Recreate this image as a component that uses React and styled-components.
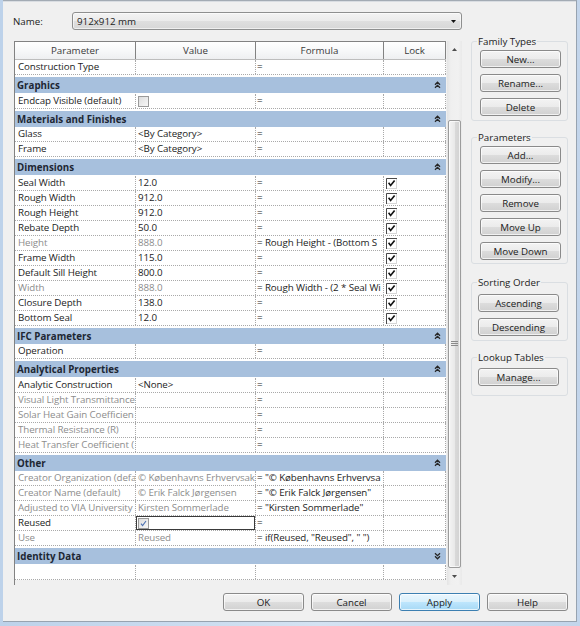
import React from 'react'
import styled, { createGlobalStyle, css } from 'styled-components'

const GRAY = '#8d8d8d'
const BAND = '#a7c0dd'
const DOTS = '1px dotted #a9a9a9'

const GlobalStyle = createGlobalStyle`
  html, body {
    margin: 0;
    padding: 0;
  }
  body {
    font-family: "Open Sans", "Noto Sans", sans-serif;
    font-size: 9.75px;
    color: #1c1c1c;
    background: #c9daee;
  }
`

const Window = styled.div`
  width: 580px;
  height: 626px;
  box-sizing: border-box;
  padding: 0 3px 4px 3px;
  background: linear-gradient(90deg, #bdd2ea, #d4e3f3 55%, #c3d5eb);
`
const Dialog = styled.div`
  height: 100%;
  box-sizing: border-box;
  display: flex;
  flex-direction: column;
  padding: 11px 8px 0 10px;
  background: #f0f0f0;
  border-top: 1px solid #a3abb4;
  border-right: 1px solid #97a3b0;
  border-bottom: 1px solid #97a3b0;
  box-shadow: inset 0 1px 0 #d9dde2;
`
const NameRow = styled.div`
  display: flex;
  align-items: center;
  height: 18px;
`
const NameLabel = styled.span`
  width: 59px;
`
const Combo = styled.div`
  width: 390px;
  height: 18px;
  box-sizing: border-box;
  display: flex;
  align-items: center;
  justify-content: space-between;
  padding: 0 5px 0 4px;
  border: 1px solid #8e8f8f;
  border-radius: 3px;
  background: linear-gradient(#f3f3f3, #ebebeb 50%, #dfdfdf 50%, #d7d7d7);
  box-shadow: inset 0 0 0 1px rgba(255, 255, 255, 0.6);
`
const Main = styled.div`
  display: flex;
  align-items: flex-start;
  margin-top: 11px;
`
const GridFrame = styled.div`
  display: flex;
  margin-left: 1px;
  width: 448px;
  height: 544px;
`
const Grid = styled.div`
  width: 432px;
  box-sizing: border-box;
  border-left: 1px solid #828282;
`
const cols = css`
  display: grid;
  grid-template-columns: 121px 120px 128px 62px;
`
const HeadRow = styled.div`
  ${cols}
  height: 19px;
  box-sizing: border-box;
  border-top: 1px solid #828282;
  border-bottom: 1px solid #bdbdbd;
`
const HeadCell = styled.div`
  line-height: 17px;
  text-align: center;
  color: #3a3a3a;
  border-right: 1px solid #828282;
  background: linear-gradient(#ffffff, #f7f8f9 50%, #eeeff1);
`
const Row = styled.div`
  ${cols}
  height: 15px;
  box-sizing: border-box;
  background: #fff;
  border-bottom: ${DOTS};
`
const Cell = styled.div`
  padding-left: ${p => p.$pad}px;
  line-height: 13px;
  letter-spacing: -0.1px;
  white-space: nowrap;
  overflow: hidden;
  border-right: ${DOTS};
  color: ${p => (p.$dim ? GRAY : 'inherit')};
  box-shadow: ${p => (p.$sel ? 'inset 0 0 0 1px #3a3a3a' : 'none')};
`
const GroupRow = styled.div`
  height: ${p => p.$h}px;
  box-sizing: border-box;
  padding: 2px 0 0;
  background: #fff;
`
const Band = styled.div`
  height: 16px;
  display: flex;
  align-items: center;
  justify-content: space-between;
  padding: 0 5px 0 2px;
  background: ${BAND};
  font-weight: 700;
  color: #1d2733;
`
const BoxIcon = styled.svg`
  display: block;
  margin: 2px 0 0 ${p => p.$left}px;
`
const Scroll = styled.div`
  margin-left: 1px;
  width: 15px;
  display: flex;
  flex-direction: column;
  background: linear-gradient(90deg, #e4e4e4, #efefef 25%, #f1f1f1 75%, #e9e9e9);
`
const ScrollArrow = styled.div`
  height: 17px;
  display: flex;
  align-items: center;
  justify-content: center;
`
const ScrollGap = styled.div`
  height: 62px;
`
const Thumb = styled.div`
  flex: 1;
  margin: 0 1px;
  display: flex;
  align-items: center;
  justify-content: center;
  border: 1px solid #9c9c9c;
  border-radius: 2px;
  background: linear-gradient(90deg, #f4f4f4, #e9e9e9 50%, #dadada 50%, #d2d2d2);
  box-shadow: inset 0 0 0 1px rgba(255, 255, 255, 0.7);
`
const Side = styled.div`
  margin: -6px 0 0 9px;
  width: 97px;
  display: flex;
  flex-direction: column;
`
const GroupBox = styled.fieldset`
  margin: ${p => p.$gap}px 0 0;
  padding: ${p => p.$pt}px 6px ${p => p.$pb}px ${p => p.$pl}px;
  border: 1px solid #dadee2;
  border-radius: 3px;
  min-width: 0;
`
const Legend = styled.legend`
  padding: 0 1px;
  margin-left: ${p => 5 - p.$pl}px;
  line-height: 13px;
  color: #1c1c1c;
`
const Stack = styled.div`
  display: flex;
  flex-direction: column;
  gap: 6px;
`
const Button = styled.button`
  width: 81px;
  height: 18px;
  padding: 0;
  box-sizing: border-box;
  font: inherit;
  color: #1c1c1c;
  border: 1px solid ${p => (p.$primary ? '#3c7fb1' : '#8a8a8a')};
  border-radius: 3px;
  background: ${p => (p.$primary
    ? 'linear-gradient(#eaf6fd, #d9f0fc 50%, #bee6fd 50%, #a7d9f5)'
    : 'linear-gradient(#f3f3f3, #ebebeb 50%, #dddddd 50%, #d1d1d1)')};
  box-shadow: inset 0 0 0 1px rgba(255, 255, 255, 0.7);
`
const Footer = styled.div`
  display: flex;
  justify-content: flex-end;
  gap: 7px;
  margin-top: 8px;
`

const Chevrons = ({ down }) => (
  <svg width="7" height="8" viewBox="0 0 7 8">
    <path
      d={down ? 'M1 1.2l2.5 2.5L6 1.2M1 4.3l2.5 2.5L6 4.3' : 'M1 3.7l2.5-2.5L6 3.7M1 6.8l2.5-2.5L6 6.8'}
      fill="none"
      stroke="#262626"
      strokeWidth="1.3"
    />
  </svg>
)

const Lock = () => (
  <BoxIcon $left={2} width="11" height="11" viewBox="0 0 11 11">
    <rect x="0.5" y="0.5" width="10" height="10" fill="#fff" stroke="#d6d6d6" />
    <path d="M0.5 11V0.5H11" fill="none" stroke="#4a4a4a" />
    <path d="M2.6 4.8l2 2.6 4-5" fill="none" stroke="#111" strokeWidth="1.6" />
  </BoxIcon>
)

const Tick = ({ on }) => (
  <BoxIcon $left={0} width="11" height="11" viewBox="0 0 11 11">
    <defs>
      <linearGradient id={on ? 'tk1' : 'tk0'} x1="0" y1="0" x2="1" y2="1">
        <stop offset="0" stopColor="#dcdcdc" />
        <stop offset="1" stopColor="#f8f8f8" />
      </linearGradient>
    </defs>
    <rect x="0.5" y="0.5" width="10" height="10" fill={`url(#${on ? 'tk1' : 'tk0'})`} stroke="#9a9a9a" />
    {on && <path d="M3 5.6l1.6 1.9L8 3" fill="none" stroke="#4a6fb0" strokeWidth="1.1" />}
  </BoxIcon>
)

const Arrow = ({ down, color = '#4d4d4d' }) => (
  <svg width="5" height="3" viewBox="0 0 5 3">
    <path d={down ? 'M0 0h5L2.5 3z' : 'M0 3h5L2.5 0z'} fill={color} />
  </svg>
)

const Grip = () => (
  <svg width="7" height="6" viewBox="0 0 7 6">
    <path d="M0 0.5h7M0 2.5h7M0 4.5h7" stroke="#8a8a8a" />
  </svg>
)

// texts are cut where the dialog cuts them
const sections = [
  { rows: [{ p: 'Construction Type', f: '=' }] },
  { title: 'Graphics', rows: [{ p: 'Endcap Visible (default)', box: 'off', f: '=' }] },
  {
    title: 'Materials and Finishes',
    rows: [
      { p: 'Glass', v: '<By Category>', f: '=' },
      { p: 'Frame', v: '<By Category>', f: '=' }
    ]
  },
  {
    title: 'Dimensions',
    rows: [
      { p: 'Seal Width', v: '12.0', f: '=', lock: true },
      { p: 'Rough Width', v: '912.0', f: '=', lock: true },
      { p: 'Rough Height', v: '912.0', f: '=', lock: true },
      { p: 'Rebate Depth', v: '50.0', f: '=', lock: true },
      { p: 'Height', v: '888.0', f: '= Rough Height - (Bottom S', lock: true, dim: true, vdim: true },
      { p: 'Frame Width', v: '115.0', f: '=', lock: true },
      { p: 'Default Sill Height', v: '800.0', f: '=', lock: true },
      { p: 'Width', v: '888.0', f: '= Rough Width - (2 * Seal Wi', lock: true, dim: true, vdim: true },
      { p: 'Closure Depth', v: '138.0', f: '=', lock: true },
      { p: 'Bottom Seal', v: '12.0', f: '=', lock: true }
    ]
  },
  { title: 'IFC Parameters', rows: [{ p: 'Operation', f: '=' }] },
  {
    title: 'Analytical Properties',
    rows: [
      { p: 'Analytic Construction', v: '<None>', f: '=' },
      { p: 'Visual Light Transmittance', f: '=', dim: true },
      { p: 'Solar Heat Gain Coefficien', f: '=', dim: true },
      { p: 'Thermal Resistance (R)', f: '=', dim: true },
      { p: 'Heat Transfer Coefficient (', f: '=', dim: true }
    ]
  },
  {
    title: 'Other',
    rows: [
      { p: 'Creator Organization (defa', v: '© Københavns Erhvervsak', f: '= "© Københavns Erhvervsa', dim: true, vdim: true },
      { p: 'Creator Name (default)', v: '© Erik Falck Jørgensen', f: '= "© Erik Falck Jørgensen"', dim: true, vdim: true },
      { p: 'Adjusted to VIA University', v: 'Kirsten Sommerlade', f: '= "Kirsten Sommerlade"', dim: true, vdim: true },
      { p: 'Reused', box: 'on', sel: true, f: '=' },
      { p: 'Use', v: 'Reused', f: '= if(Reused, "Reused", " ")', dim: true, vdim: true }
    ]
  },
  { title: 'Identity Data', closed: true, rows: [{ p: '', f: '' }] }
]

const sideGroups = [
  { title: 'Family Types', gap: 0, pt: 2, pb: 4, pl: 8, buttons: ['New...', 'Rename...', 'Delete'] },
  { title: 'Parameters', gap: 10, pt: 2, pb: 3, pl: 8, buttons: ['Add...', 'Modify...', 'Remove', 'Move Up', 'Move Down'] },
  { title: 'Sorting Order', gap: 12, pt: 5, pb: 4, pl: 6, buttons: ['Ascending', 'Descending'] },
  { title: 'Lookup Tables', gap: 10, pt: 4, pb: 9, pl: 6, buttons: ['Manage...'] }
]

const ParamRow = ({ row }) => (
  <Row>
    <Cell $pad={3} $dim={row.dim}>{row.p}</Cell>
    <Cell $pad={2} $dim={row.vdim} $sel={row.sel}>
      {row.box ? <Tick on={row.box === 'on'} /> : row.v}
    </Cell>
    <Cell $pad={1}>{row.f}</Cell>
    <Cell $pad={0}>{row.lock && <Lock />}</Cell>
  </Row>
)

export default function App () {
  return (
    <Window>
      <GlobalStyle />
      <Dialog>
        <NameRow>
          <NameLabel>Name:</NameLabel>
          <Combo>
            <span>912x912 mm</span>
            <Arrow down color="#111" />
          </Combo>
        </NameRow>
        <Main>
          <GridFrame>
            <Grid>
              <HeadRow>
                <HeadCell>Parameter</HeadCell>
                <HeadCell>Value</HeadCell>
                <HeadCell>Formula</HeadCell>
                <HeadCell>Lock</HeadCell>
              </HeadRow>
              {sections.map((section, i) => (
                <React.Fragment key={i}>
                  {section.title && (
                    <GroupRow $h={i % 2 ? 19 : 18}>
                      <Band>
                        <span>{section.title}</span>
                        <Chevrons down={section.closed} />
                      </Band>
                    </GroupRow>
                  )}
                  {section.rows.map((row, j) => <ParamRow key={j} row={row} />)}
                </React.Fragment>
              ))}
            </Grid>
            <Scroll>
              <ScrollArrow><Arrow /></ScrollArrow>
              <ScrollGap />
              <Thumb><Grip /></Thumb>
              <ScrollArrow><Arrow down /></ScrollArrow>
            </Scroll>
          </GridFrame>
          <Side>
            {sideGroups.map(group => (
              <GroupBox key={group.title} $gap={group.gap} $pt={group.pt} $pb={group.pb} $pl={group.pl}>
                <Legend $pl={group.pl}>{group.title}</Legend>
                <Stack>
                  {group.buttons.map(label => <Button key={label}>{label}</Button>)}
                </Stack>
              </GroupBox>
            ))}
          </Side>
        </Main>
        <Footer>
          <Button>OK</Button>
          <Button>Cancel</Button>
          <Button $primary>Apply</Button>
          <Button>Help</Button>
        </Footer>
      </Dialog>
    </Window>
  )
}
